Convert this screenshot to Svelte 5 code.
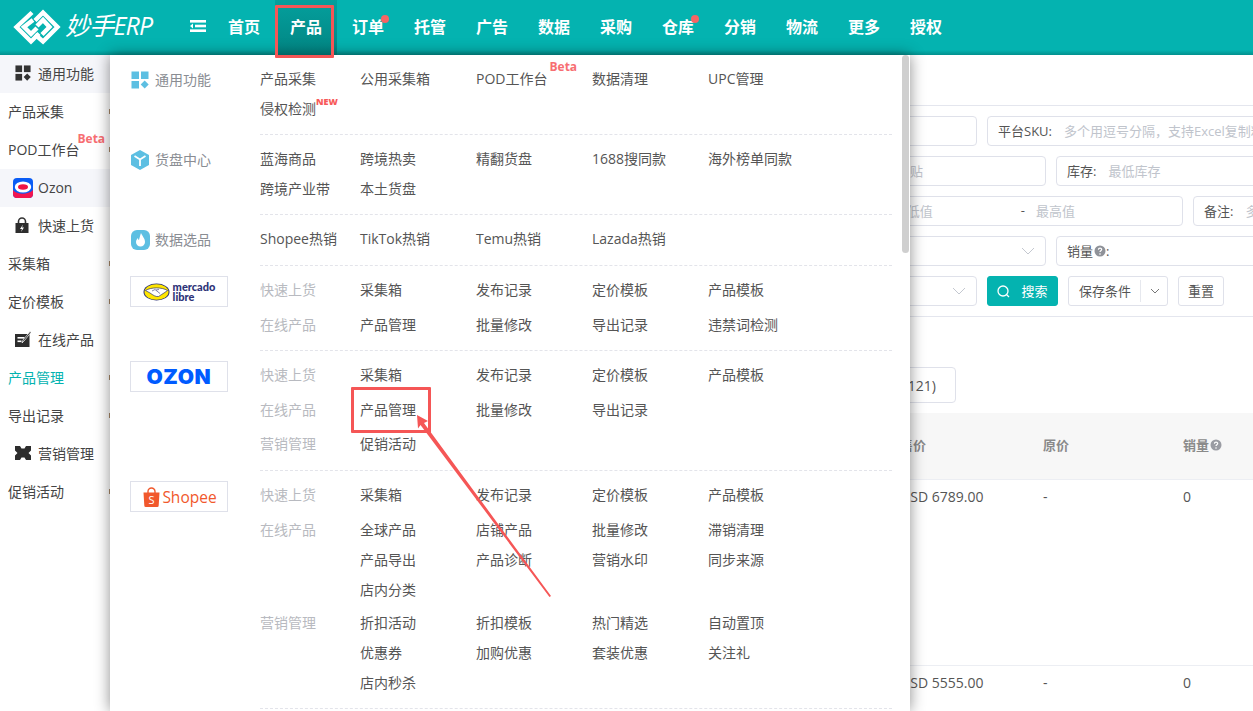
<script>
  const nav = [
    { t: '首页' }, { t: '产品', active: true }, { t: '订单', dot: true }, { t: '托管' }, { t: '广告' }, { t: '数据' },
    { t: '采购' }, { t: '仓库', dot: true }, { t: '分销' }, { t: '物流' }, { t: '更多' }, { t: '授权' }
  ];
  const side = [
    { t: '通用功能', head: 'grid', shade: true },
    { t: '产品采集' }, { t: 'POD工作台', beta: true },
    { t: 'Ozon', head: 'ozon', shade: true },
    { t: '快速上货', head: 'lock' },
    { t: '采集箱' }, { t: '定价模板' },
    { t: '在线产品', head: 'edit' },
    { t: '产品管理', on: true }, { t: '导出记录' },
    { t: '营销管理', head: 'ticket' },
    { t: '促销活动' }
  ];
  const general = [
    { title: '通用功能', icon: 'grid', items: [
      { t: '产品采集' }, { t: '公用采集箱' }, { t: 'POD工作台', beta: true }, { t: '数据清理' }, { t: 'UPC管理' },
      { t: '侵权检测', isNew: true }] },
    { title: '货盘中心', icon: 'cube', items: [
      { t: '蓝海商品' }, { t: '跨境热卖' }, { t: '精翻货盘' }, { t: '1688搜同款' }, { t: '海外榜单同款' },
      { t: '跨境产业带' }, { t: '本土货盘' }] },
    { title: '数据选品', icon: 'fire', items: [
      { t: 'Shopee热销' }, { t: 'TikTok热销' }, { t: 'Temu热销' }, { t: 'Lazada热销' }] }
  ];
  const platforms = [
    { logo: 'mercado', cls: 'p-mercado', groups: [
      { l: '快速上货', items: ['采集箱', '发布记录', '定价模板', '产品模板'] },
      { l: '在线产品', items: ['产品管理', '批量修改', '导出记录', '违禁词检测'] }] },
    { logo: 'ozon', cls: 'p-ozon', groups: [
      { l: '快速上货', items: ['采集箱', '发布记录', '定价模板', '产品模板'] },
      { l: '在线产品', items: ['产品管理', '批量修改', '导出记录'] },
      { l: '营销管理', items: ['促销活动'] }] },
    { logo: 'shopee', cls: 'p-shopee', groups: [
      { l: '快速上货', items: ['采集箱', '发布记录', '定价模板', '产品模板'] },
      { l: '在线产品', items: ['全球产品', '店铺产品', '批量修改', '滞销清理', '产品导出', '产品诊断', '营销水印', '同步来源', '店内分类'] },
      { l: '营销管理', items: ['折扣活动', '折扣模板', '热门精选', '自动置顶', '优惠券', '加购优惠', '套装优惠', '关注礼', '店内秒杀'] }] }
  ];
</script>

{#snippet chevron()}
  <svg class="chev" width="14" height="8" viewBox="0 0 14 8"><path d="M1 1l6 6 6-6" fill="none" stroke="#c4c8d0" stroke-width="1"/></svg>
{/snippet}

{#snippet help(c)}
  <svg class="help" width="12" height="12" viewBox="0 0 12 12"><circle cx="6" cy="6" r="5.5" fill={c}/><path d="M4.4 4.7c0-2.1 3.3-2 3.3-.1 0 1.2-1.7 1.2-1.7 2.5" fill="none" stroke="#fff" stroke-width="1.2"/><circle cx="6" cy="9" r=".8" fill="#fff"/></svg>
{/snippet}

{#snippet gridIcon(c, s)}
  <svg width={s} height={s} viewBox="0 0 18 18" fill={c}><rect x="0.5" y="0.5" width="7.5" height="7.5"/><rect x="10" y="0.5" width="7.5" height="7.5"/><rect x="0.5" y="10" width="7.5" height="7.5"/><path d="M13.7 9.6l4 4-4 4-4-4z"/></svg>
{/snippet}

<div class="page">
  <header class="top">
    <div class="brand">
      <svg width="48" height="36" viewBox="0 0 48 36" fill="none" stroke="#fff" stroke-width="4.4" stroke-linejoin="miter">
        <path d="M19 3.500L3.500 18 18 32.500l8-8"/>
        <path d="M20 11L11 18l7 7 6-6"/>
        <path d="M22 25.500l8 7 14.500-14.500L30 3.500l-8 8"/>
        <path d="M29 25.500l7.500-7.500-6.500-7-6 6"/>
      </svg>
      <span class="brand-name">妙手ERP</span>
    </div>
    <svg class="burger" width="16" height="12" viewBox="0 0 16 12" fill="#fff"><rect x="0" y="0" width="16" height="2.600"/><rect x="5" y="4.700" width="11" height="2.600"/><path d="M0 6l3-2.400v4.800z"/><rect x="0" y="9.400" width="16" height="2.600"/></svg>
    <nav class="nav">
      {#each nav as n}
        <span class="nav-item" class:active={n.active}>{n.t}{#if n.dot}<i class="dot"></i>{/if}</span>
      {/each}
    </nav>
  </header>

  <div class="body">
    <aside class="side">
      {#each side as s}
        <div class="side-row" class:shade={s.shade} class:sub={!s.head} class:on={s.on}>
          {#if s.head}
            <span class="side-ico" class:wide={s.head === 'ozon'}>
              {#if s.head === 'grid'}
                {@render gridIcon('#333', 16)}
              {:else if s.head === 'ozon'}
                <svg width="20" height="20" viewBox="0 0 20 20"><rect width="20" height="20" rx="4" fill="#0a5cf5"/><path d="M0 12c4 5 15 5 20 0v4a4 4 0 0 1-4 4H4a4 4 0 0 1-4-4z" fill="#f2154f"/><ellipse cx="10" cy="9" rx="8.200" ry="5.600" fill="#fff"/><ellipse cx="10" cy="9" rx="5" ry="2.700" fill="#ee1446"/></svg>
              {:else if s.head === 'lock'}
                <svg width="14" height="16" viewBox="0 0 14 16"><path d="M3.500 7V4.500a3.500 3.500 0 0 1 7 0V7" fill="none" stroke="#333" stroke-width="1.600"/><rect x="0.500" y="6" width="13" height="10" fill="#2d2d2d"/><path d="M8 7.500L5 12h2l-1 3 3-4.500H7z" fill="#fff"/></svg>
              {:else if s.head === 'edit'}
                <svg width="16" height="16" viewBox="0 0 16 16"><rect x="0" y="3" width="14.500" height="13" fill="#2d2d2d"/><rect x="2.500" y="6" width="7" height="1.600" fill="#fff"/><rect x="2.500" y="9.500" width="4" height="1.600" fill="#fff"/><path d="M7 12l1-3 7-8.500 1 1-7 8.500z" fill="#2d2d2d" stroke="#fff" stroke-width=".7"/></svg>
              {:else}
                <svg width="16" height="14" viewBox="0 0 16 14"><path d="M0 0h5l1.500 2.500h3L11 0h5v4.500L13.500 7 16 9.500V14h-5l-1.500-2.500h-3L5 14H0V9.500L2.500 7 0 4.500z" fill="#2d2d2d"/></svg>
              {/if}
            </span>
          {/if}
          <span class="side-text">{s.t}{#if s.beta}<b class="beta side-beta">Beta</b>{/if}</span>
        </div>
      {/each}
    </aside>

    <main class="main">
      <div class="filters">
        <div class="f-row r1">
          <div class="field w1"></div>
          <div class="field grow"><label>平台SKU:</label><span class="ph">多个用逗号分隔，支持Excel复制粘贴</span></div>
        </div>
        <div class="f-row r2">
          <div class="field w2 end"><span class="ph">粘贴</span></div>
          <div class="field grow"><label>库存:</label><span class="ph">最低库存</span></div>
        </div>
        <div class="f-row r3">
          <div class="field w3 range"><span class="ph lo">最低值</span><span class="sep">-</span><span class="ph">最高值</span></div>
          <div class="field grow"><label>备注:</label><span class="ph">多个用逗号分隔</span></div>
        </div>
        <div class="f-row r4">
          <div class="field w2 sel">{@render chevron()}</div>
          <div class="field grow"><label>销量{@render help('#8f9299')}:</label></div>
        </div>
        <div class="f-row r5">
          <div class="field w1 sel">{@render chevron()}</div>
          <button class="btn primary"><svg width="13" height="13" viewBox="0 0 13 13" fill="none" stroke="#fff" stroke-width="1.300"><circle cx="6" cy="6" r="5"/><path d="M9.500 9.500l2.500 2.500"/></svg><span>搜索</span></button>
          <div class="btn split"><span>保存条件</span><i></i><svg width="10" height="6" viewBox="0 0 10 6"><path d="M1 1l4 4 4-4" fill="none" stroke="#777" stroke-width="1"/></svg></div>
          <button class="btn plain"><span>重置</span></button>
        </div>
      </div>

      <div class="tabs"><span class="tab">已下架(121)</span></div>

      <div class="table">
        <div class="t-row t-head"><span>售价</span><span>原价</span><span>销量{@render help('#9a9ca3')}</span></div>
        <div class="t-row t-body tall"><span>USD 6789.00</span><span>-</span><span>0</span></div>
        <div class="t-row t-body"><span>USD 5555.00</span><span>-</span><span>0</span></div>
      </div>
    </main>
  </div>

  <section class="menu">
    <div class="scrollbar"></div>
    {#each general as g, i}
      <div class="sec g{i}">
        <div class="sec-left title">
          <span class="sec-ico">
            {#if g.icon === 'grid'}
              {@render gridIcon('#5dbfe2', 18)}
            {:else if g.icon === 'cube'}
              <svg width="18" height="20" viewBox="0 0 18 20"><path d="M9 0l9 5v10l-9 5-9-5V5z" fill="#5dbfe2"/><path d="M3.500 6L9 9.500 14.500 6M9 9.500V16" fill="none" stroke="#fff" stroke-width="1.800"/></svg>
            {:else}
              <svg width="19" height="20" viewBox="0 0 19 20"><rect width="19" height="20" rx="6" fill="#5dbfe2"/><path d="M10 3c1 3 4 5 4 9a4.500 4.500 0 0 1-9 0c0-2 1-3 2-4 0 1 .5 2 1 2 .5-2 1-4 2-7z" fill="#fff"/></svg>
            {/if}
          </span>
          {g.title}
        </div>
        <div class="sec-right flat">
          {#each g.items as it}
            <span class="item">{it.t}{#if it.beta}<b class="beta">Beta</b>{/if}{#if it.isNew}<b class="new">NEW</b>{/if}</span>
          {/each}
        </div>
      </div>
    {/each}

    {#each platforms as p}
      <div class="sec {p.cls}">
        <div class="sec-left">
          <div class="logo">
            {#if p.logo === 'mercado'}
              <svg width="27" height="18" viewBox="0 0 27 18"><ellipse cx="13.500" cy="9" rx="13" ry="8.500" fill="#2d3277"/><ellipse cx="13.500" cy="9" rx="12" ry="7.700" fill="#ffe600"/><path d="M2.500 7.500C8 4 19 4 24.500 7.500L21 10c-2 1-3.500 2.500-5.500 3.500-3 .5-5.500-1.500-8.500-3.500z" fill="#fff" stroke="#2d3277" stroke-width=".7"/><path d="M9 8l3-1.500 5 4M13 7l3-.5" fill="none" stroke="#2d3277" stroke-width=".6"/></svg>
              <span class="ml">mercado<br />libre</span>
            {:else if p.logo === 'ozon'}
              <span class="oz">OZON</span>
            {:else}
              <svg width="17" height="20" viewBox="0 0 17 20"><path d="M5 6V4.500a3.500 3.500 0 0 1 7 0V6" fill="none" stroke="#f1582c" stroke-width="1.400"/><path d="M0.500 5.500h16l-.8 13a1.500 1.500 0 0 1-1.500 1.500H2.800a1.500 1.500 0 0 1-1.500-1.500z" fill="#f1582c"/><text x="8.500" y="16.500" text-anchor="middle" font-size="11" fill="#fff" font-family="'Open Sans',sans-serif">S</text></svg>
              <span class="sp">Shopee</span>
            {/if}
          </div>
        </div>
        <div class="sec-right">
          {#each p.groups as gr}
            <div class="grp">
              <span class="grp-label">{gr.l}</span>
              <div class="grp-items">
                {#each gr.items as it}<span class="item">{it}</span>{/each}
              </div>
            </div>
          {/each}
        </div>
      </div>
    {/each}
  </section>

  <div class="mark mark-a"></div>
  <div class="mark mark-b"></div>
  <svg class="arrow" width="1253" height="711" viewBox="0 0 1253 711">
    <polygon points="417,415 428,421 424,423 551,596 549.500,597 420.500,425 418,428.500" fill="#f55656"/>
  </svg>
</div>

<style>
  :global(body) { margin: 0; }
  .page {
    position: relative; width: 1253px; height: 711px; overflow: hidden; background: #fff;
    font-family: "Open Sans", "Noto Sans CJK SC", sans-serif; font-size: 14px; color: #555;
  }
  .top {
    height: 55px; display: flex; align-items: center; position: relative; box-sizing: border-box;
    background: linear-gradient(to bottom, #04b3b0 0, #04b3b0 50px, #02908e 55px);
  }
  .brand { display: flex; align-items: center; width: 190px; padding-left: 13px; box-sizing: border-box; flex: none; color: #fff; padding-bottom: 2px; }
  .brand-name { font-size: 25px; font-style: italic; font-weight: 400; margin-left: 4px; letter-spacing: -.8px; line-height: 1; padding-bottom: 2px; }
  .burger { flex: none; margin-right: 7px; margin-bottom: 4px; }
  .nav { display: flex; align-self: stretch; margin-left: 0; }
  .nav-item {
    position: relative; display: flex; align-items: center; width: 62px; justify-content: center; box-sizing: border-box;
    color: #fff; font-size: 16px; font-weight: 700; font-family: "Noto Sans CJK SC", sans-serif; padding-bottom: 3px;
  }
  .nav-item.active { background: linear-gradient(to bottom, #04a09d, #028583); }
  .dot { position: absolute; left: 44px; top: 15px; width: 8px; height: 8px; border-radius: 50%; background: #f76464; }

  .body { display: flex; }
  .side { width: 110px; flex: none; }
  .side-row { position: relative; height: 38px; display: flex; align-items: center; color: #444; padding-left: 13px; padding-bottom: 2px; box-sizing: border-box; }
  .side-row.sub { padding-left: 8px; }
  .side-row.shade { background: #f5f6fa; }
  .side-row.on { color: #04b3b0; }
  .side-ico { width: 25px; display: flex; align-items: center; padding-left: 2px; box-sizing: border-box; flex: none; }
  .side-ico.wide { padding-left: 0; padding-top: 2px; }
  .side-row .side-text { position: relative; white-space: nowrap; }
  .side-row.sub::after { content: ""; position: absolute; right: 0; top: 16px; width: 1px; height: 5px; background: #a98a68; }

  .beta { position: absolute; left: 100%; top: -4px; margin-left: 2px; font-size: 12px; font-weight: 700; color: #f76e72; font-family: "Open Sans", sans-serif; line-height: 14px; }
  .side-beta { top: -7px; margin-left: -2px; }
  .new { position: absolute; left: 100%; top: 2px; font-size: 9px; font-weight: 800; color: #f75a5a; line-height: 11px; font-family: "Open Sans", sans-serif; }

  .main { flex: 1; min-width: 0; }
  .filters { margin-top: 50px; padding: 10px 0 10px 10px; border-top: 1px solid #e4e6ee; border-bottom: 1px solid #e4e6ee; display: flex; flex-direction: column; gap: 10px; }
  .f-row { display: flex; gap: 10px; height: 30px; }
  .field { border: 1px solid #dfe1ea; border-radius: 4px; box-sizing: border-box; height: 30px; display: flex; align-items: center; padding: 0 10px 2px; flex: none; font-size: 13px; white-space: nowrap; overflow: hidden; }
  .field.grow { flex: 1 0 auto; min-width: 400px; }
  .w1 { width: 857px; }
  .w2 { width: 926px; }
  .w3 { width: 1063px; }
  .end { justify-content: flex-end; padding-right: 122px; }
  .range { justify-content: flex-end; padding-right: 107px; }
  .range .lo { margin-right: 88px; }
  .sep { margin-right: 11px; color: #555; }
  .sel { justify-content: flex-end; padding: 0 10px 0 0; }
  .chev { display: block; }
  .help { display: inline-block; vertical-align: -1px; margin-left: 1px; }
  label { color: #555; margin-right: 12px; font-size: 13px; }
  .ph { color: #c0c4cc; }
  .btn { box-sizing: border-box; height: 30px; border-radius: 3px; font-family: inherit; font-size: 13px; display: flex; align-items: center; color: #555; background: #fff; border: 1px solid #dfe1ea; }
  .btn span { padding-bottom: 2px; }
  .primary { width: 71px; background: #04b3b0; border-color: #04b3b0; color: #fff; justify-content: center; gap: 11px; padding: 0; }
  .split { width: 100px; padding-left: 10px; flex: none; }
  .split i { width: 1px; height: 22px; background: #e6e8ee; margin: 0 9px 0 9px; }
  .plain { width: 46px; justify-content: center; padding: 0; }

  .tabs { margin-top: 50px; padding-left: 10px; height: 36px; }
  .tab { display: flex; align-items: center; justify-content: flex-end; width: 836px; height: 36px; box-sizing: border-box; border: 1px solid #dfe1ea; border-radius: 4px; padding-right: 19px; }
  .table { margin-top: 10px; }
  .t-row { display: grid; grid-template-columns: 143px 140px 1fr; padding-left: 790px; box-sizing: border-box; }
  .t-head { height: 67px; background: #f7f7f7; border-bottom: 1px solid #eceef3; align-items: center; font-weight: 700; color: #8a8a8a; font-size: 13px; font-family: "Noto Sans CJK SC", sans-serif; padding-bottom: 4px; }
  .t-body { padding-top: 7px; line-height: 20px; border-bottom: 1px solid #eceef3; height: 186px; box-sizing: border-box; }

  .menu { position: absolute; left: 110px; top: 55px; width: 800px; height: 656px; background: #fff; box-shadow: 0 0 14px rgba(0,0,0,.45); overflow: hidden; }
  .scrollbar { position: absolute; right: 1px; top: 0; width: 7px; height: 198px; background: #cfcfcf; border-radius: 4px; }
  .sec { display: flex; padding-left: 20px; }
  .sec-left { width: 130px; flex: none; box-sizing: border-box; }
  .title { display: flex; align-items: flex-start; color: #8a8d93; font-size: 14px; padding-top: 15px; line-height: 20px; }
  .sec-ico { width: 25px; height: 20px; display: flex; align-items: center; padding-left: 1px; box-sizing: border-box; flex: none; }
  .sec-right { width: 632px; border-bottom: 1px dashed #e3e4ea; box-sizing: content-box; padding: 9px 0 10px; }
  .flat { display: grid; grid-template-columns: 100px repeat(4, 116px); grid-auto-rows: 30px; }
  .g2 .sec-right { padding-bottom: 11px; }
  .p-ozon .sec-right { padding-bottom: 11px; }
  .item { position: relative; display: flex; align-items: center; width: max-content; height: 30px; box-sizing: border-box; padding-bottom: 3px; font-size: 14px; white-space: nowrap; color: #555; }
  .grp { display: grid; grid-template-columns: 100px 1fr; margin-bottom: 5px; }
  .grp:last-child { margin-bottom: 0; }
  .grp-label { color: #b8bac0; font-size: 14px; line-height: 29px; }
  .grp-items { display: grid; grid-template-columns: repeat(4, 116px); grid-auto-rows: 30px; }
  .p-ozon .grp:nth-child(2) { margin-bottom: 4px; }
  .p-shopee .grp:nth-child(2) { margin-bottom: 3px; }
  .p-mercado .sec-left, .p-ozon .sec-left, .p-shopee .sec-left { padding-top: 10px; }
  .logo { width: 98px; height: 31px; box-sizing: border-box; border: 1px solid #dfe1ea; display: flex; align-items: center; justify-content: center; gap: 3px; background: #fff; }
  .ml { font-family: Lato, sans-serif; font-weight: 900; font-size: 11px; line-height: 10px; color: #2d3277; }
  .oz { font-family: Inter, sans-serif; font-weight: 900; font-size: 20px; letter-spacing: .5px; color: #005bff; line-height: 1; transform: scaleX(1.05); }
  .p-shopee .logo { padding-left: 2px; gap: 2px; }
  .sp { font-family: "Open Sans", sans-serif; font-size: 15.500px; color: #f1582c; line-height: 1; padding-top: 3px; }

  .mark { position: absolute; border: 3px solid #f55656; box-sizing: border-box; border-radius: 1px; }
  .mark-a { left: 275px; top: 5px; width: 59px; height: 53px; }
  .mark-b { left: 351px; top: 387px; width: 80px; height: 46px; }
  .arrow { position: absolute; left: 0; top: 0; pointer-events: none; }
</style>
